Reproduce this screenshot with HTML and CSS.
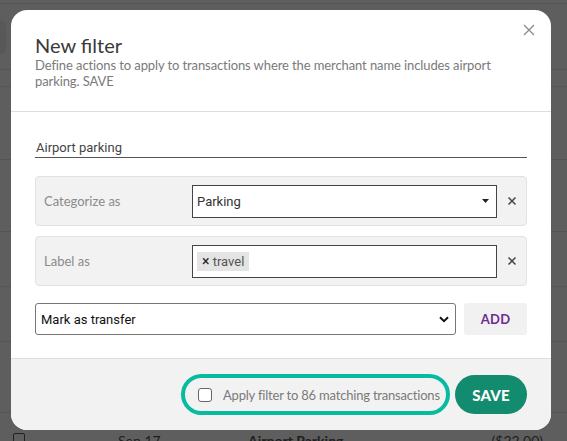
FILE: index.html
```html
<!DOCTYPE html>
<html lang="en">
<head>
<meta charset="utf-8">
<title>New filter</title>
<link rel="stylesheet" href="styles.css">
</head>
<body>
<div class="page">
  <div class="bg-top"><div class="bg-chip"></div></div>
  <div class="bg-row r1"></div>
  <div class="bg-row r2"></div>
  <div class="bg-row r3"></div>
  <div class="bg-row r4"></div>
  <div class="bg-row r5"></div>
  <div class="bg-row r6"></div>
  <div class="bg-row r7"></div>
  <div class="bg-tx">
    <span class="bg-check"></span>
    <span class="bg-date">Sep 17</span>
    <span class="bg-merchant">Airport Parking</span>
    <span class="bg-amount">($22.00)</span>
  </div>
</div>

<div class="modal">
  <button class="close" aria-label="Close">
    <svg width="12" height="12" viewBox="0 0 12 12"><path d="M1 1L11 11M11 1L1 11" stroke="#8a8a8a" stroke-width="1.3" fill="none"/></svg>
  </button>
  <div class="modal-header">
    <h1 class="title">New filter</h1>
    <p class="subtitle">Define actions to apply to transactions where the merchant name includes airport parking. SAVE</p>
  </div>
  <div class="modal-body">
    <div class="name-input">Airport parking</div>

    <div class="action">
      <div class="action-label">Categorize as</div>
      <div class="field">
        <span class="field-text">Parking</span>
        <svg class="caret" width="7" height="4" viewBox="0 0 7 4"><path d="M0 0H7L3.5 4Z" fill="#222"/></svg>
      </div>
      <div class="remove">
        <svg width="10" height="10" viewBox="0 0 10 10"><path d="M1.5 1.5L8.5 8.5M8.5 1.5L1.5 8.5" stroke="#444" stroke-width="1.5" fill="none"/></svg>
      </div>
    </div>

    <div class="action">
      <div class="action-label">Label as</div>
      <div class="field">
        <span class="tag"><span class="tag-x">×</span> travel</span>
      </div>
      <div class="remove">
        <svg width="10" height="10" viewBox="0 0 10 10"><path d="M1.5 1.5L8.5 8.5M8.5 1.5L1.5 8.5" stroke="#444" stroke-width="1.5" fill="none"/></svg>
      </div>
    </div>

    <div class="add-row">
      <div class="select">
        <span class="select-text">Mark as transfer</span>
        <svg class="chevron" width="10" height="7" viewBox="0 0 10 7"><path d="M1 1.2L5 5.2L9 1.2" stroke="#111" stroke-width="2" fill="none"/></svg>
      </div>
      <button class="add">ADD</button>
    </div>
  </div>
  <div class="modal-footer">
    <label class="apply">
      <span class="checkbox"></span>
      <span class="apply-text">Apply filter to 86 matching transactions</span>
    </label>
    <button class="save">SAVE</button>
  </div>
</div>
</body>
</html>
```
FILE: styles.css
```css
* { box-sizing: border-box; }
html, body { margin: 0; padding: 0; }
body {
  width: 567px;
  height: 441px;
  overflow: hidden;
  background: #5e5e5e;
  font-family: "Lato", "Liberation Sans", sans-serif;
  position: relative;
}

.page { height: 441px; position: relative; }
.bg-top { height: 4px; border-bottom: 1px solid #545454; position: relative; }
.bg-chip {
  position: absolute; left: -20px; top: 20px; width: 26px; height: 34px;
  background: #585858; border-radius: 6px;
}
.bg-row { border-bottom: 1px solid #555; }
.r1 { height: 66px; }
.r2 { height: 17px; }
.r3 { height: 73px; }
.r4 { height: 72px; }
.r5 { height: 55px; }
.r6 { height: 55px; }
.r7 { height: 71px; }
.bg-tx {
  display: flex; align-items: flex-start;
  height: 27px; padding-top: 19px;
  font-family: "Lato", "Liberation Sans", sans-serif;
  font-size: 14px; color: #1e1e1e;
}
.bg-check {
  width: 12px; height: 12px; border: 1px solid #222; border-radius: 2px;
  margin: 1px 0 0 13px;
}
.bg-date { margin-left: 93px; width: 130px; }
.bg-merchant { font-weight: 700; }
.bg-amount { margin-left: auto; margin-right: 24px; }

.modal {
  position: absolute;
  left: 11px; top: 10px;
  width: 540px; height: 420px;
  background: #fff;
  border-radius: 16px;
  overflow: hidden;
  display: flex; flex-direction: column;
}
.close {
  position: absolute; right: 12px; top: 10px;
  width: 20px; height: 20px; padding: 0; border: 0; background: none;
  display: flex; align-items: center; justify-content: center;
}
.modal-header {
  padding: 23px 24px 22px;
  border-bottom: 1px solid #dedede;
}
.title {
  margin: 0;
  font-size: 20px; line-height: 24px; font-weight: 400;
  color: #3a3a3a;
}
.subtitle {
  margin: 0;
  font-size: 13px; line-height: 16px;
  color: #7a7a7a;
  letter-spacing: -0.1px;
}
.modal-body {
  padding: 22px 24px 23px;
  display: flex; flex-direction: column;
  border-bottom: 1px solid #dedede;
}
.name-input {
  font-family: "Roboto", sans-serif;
  font-size: 13px; color: #444;
  height: 24px; line-height: 20px; padding-top: 4px;
  padding-left: 1px;
  border-bottom: 1px solid #555;
  margin-bottom: 18px;
}
.action {
  display: flex; align-items: center;
  height: 50px;
  background: #f2f2f2;
  border: 1px solid #e2e2e2;
  border-radius: 4px;
  padding-left: 8px;
  margin-bottom: 10px;
}
.action + .action { margin-bottom: 17px; }
.action-label {
  width: 148px; font-size: 13px; color: #8a8a8a;
}
.field {
  width: 305px; height: 33px;
  background: #fff;
  border: 1px solid #444;
  display: flex; align-items: center;
  padding: 0 7px 0 4px;
  font-family: "Roboto", sans-serif; font-size: 13px; color: #333;
}
.field-text { flex: 1; }
.caret { display: block; }
.tag {
  background: #e4e4e4; color: #555;
  height: 19px; line-height: 19px; padding: 0 5px 0 5px;
  font-size: 13px;
}
.tag-x { color: #222; font-size: 14px; }
.remove {
  flex: 1; display: flex; justify-content: center; align-items: center;
  padding-left: 1px;
}
.add-row { display: flex; gap: 8px; }
.select {
  flex: 1; height: 32px;
  border: 1px solid #767676; border-radius: 3px;
  display: flex; align-items: center;
  padding: 0 6px 0 5px;
  font-family: "Roboto", sans-serif; font-size: 13px; color: #111;
}
.select-text { flex: 1; }
.add {
  width: 63px; height: 32px;
  border: 0; border-radius: 3px;
  background: #f1f1f1;
  color: #6e2b91;
  font-family: "Lato", sans-serif; font-size: 13px; font-weight: 700;
  letter-spacing: 0.3px;
  padding: 0;
}
.modal-footer {
  flex: 1;
  background: #f2f2f2;
  display: flex; justify-content: flex-end; align-items: flex-start;
  gap: 5px;
  padding: 15px 24px 0;
}
.apply {
  display: flex; align-items: center;
  height: 41px; width: 269px;
  border: 4px solid #07baa0;
  border-radius: 21px;
  padding-left: 13px;
}
.checkbox {
  width: 14px; height: 14px;
  background: #fff;
  border: 1px solid #666; border-radius: 3px;
  margin-right: 11px;
}
.apply-text { font-size: 13px; color: #7a7a7a; white-space: nowrap; letter-spacing: -0.2px; }
.save {
  width: 72px; height: 39px; margin-top: 1px;
  border: 0; border-radius: 20px;
  background: #138b6e; color: #fff;
  font-family: "Lato", sans-serif; font-size: 15px; font-weight: 900;
  letter-spacing: 0.2px;
  padding: 0;
}
```
